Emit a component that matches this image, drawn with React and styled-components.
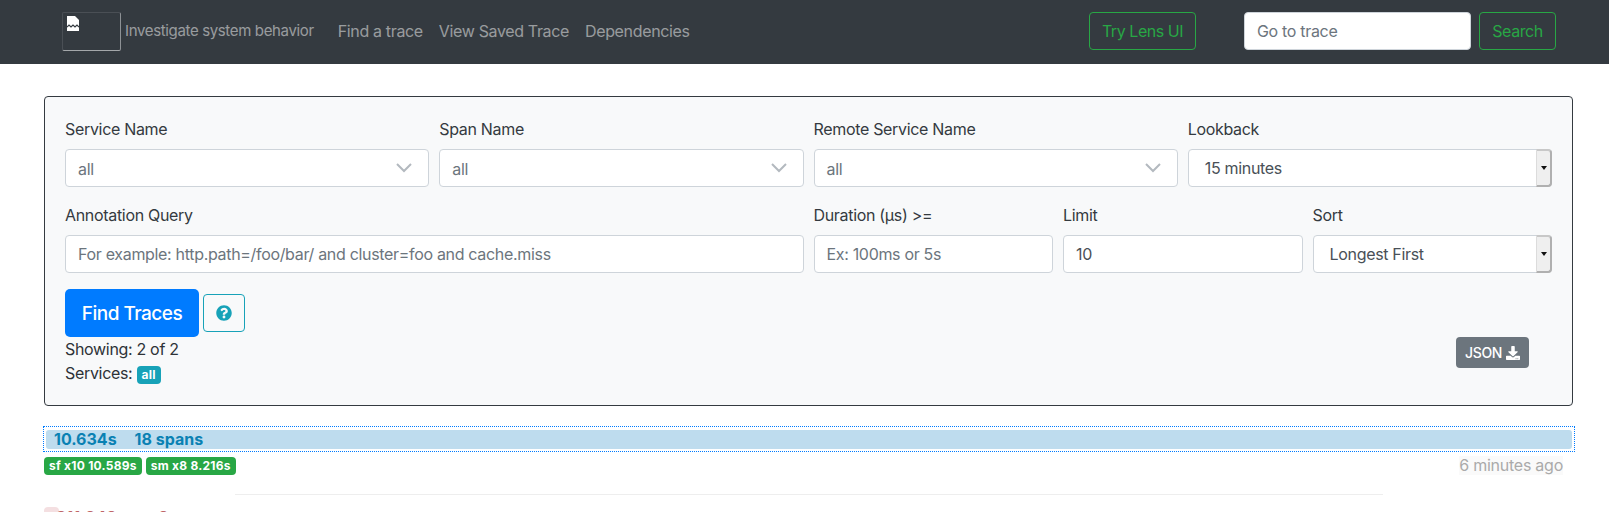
import React from 'react';
import styled, { createGlobalStyle } from 'styled-components';
import { FaQuestionCircle, FaDownload } from 'react-icons/fa';

const GlobalStyle = createGlobalStyle`
  html, body {
    margin: 0;
    padding: 0;
    height: 512px;
    overflow: hidden;
    background: #fff;
  }
  body {
    font-family: Inter, "Liberation Sans", sans-serif;
    font-size: 16px;
    line-height: 24px;
    color: #2d3237;
    letter-spacing: -0.32px;
  }
  * {
    box-sizing: border-box;
  }
`;

const Navbar = styled.nav`
  height: 64px;
  background: #343a40;
  display: flex;
  align-items: center;
  padding: 0 53px 2px 62px;
`;

const LogoBox = styled.div`
  width: 59px;
  height: 39px;
  margin-right: 4px;
  padding: 3px 4px;
  border: 1px solid #4a4f55;
  border-right-color: #8d9195;
  border-bottom-color: #a4a7aa;
  border-radius: 2px;
  line-height: 0;
`;

const Tagline = styled.span`
  font-size: 15px;
  letter-spacing: -0.35px;
  color: rgba(255, 255, 255, 0.5);
  margin-right: 16px;
`;

const NavLink = styled.a`
  padding: 0 8px;
  letter-spacing: -0.35px;
  color: rgba(255, 255, 255, 0.5);
`;

const NavRight = styled.div`
  margin-left: auto;
  display: flex;
  align-items: center;
`;

const OutlineSuccess = styled.button`
  width: ${({ $width }) => $width}px;
  height: 38px;
  padding: 0;
  font: inherit;
  letter-spacing: -0.45px;
  color: #28a745;
  background: transparent;
  border: 1px solid #28a745;
  border-radius: 4px;
`;

const TraceInput = styled.input`
  width: 227px;
  height: 38px;
  margin: 0 8px 0 48px;
  padding: 0 12px;
  font: inherit;
  letter-spacing: inherit;
  border: 1px solid #ced4da;
  border-radius: 4px;
  &::placeholder {
    color: #6c757d;
    opacity: 1;
  }
`;

const Main = styled.main`
  padding: 32px 36px 0 44px;
`;

const Card = styled.section`
  background: #f8f9fa;
  border: 1px solid #343a40;
  border-radius: 4px;
  padding: 20px;
`;

const FieldGrid = styled.div`
  display: grid;
  grid-template-columns: repeat(12, 1fr);
  column-gap: 10px;
  row-gap: 16px;
`;

const Field = styled.label`
  display: flex;
  flex-direction: column;
  grid-column: span ${({ $span }) => $span};
  min-width: 0;
`;

const Label = styled.span`
  height: 24px;
  margin-bottom: 8px;
  color: #343a40;
`;

const Control = styled.div`
  position: relative;
  height: 38px;
  display: flex;
  align-items: center;
  background: #fff;
  border: 1px solid #ced4da;
  border-radius: 4px;
  padding: 0 12px;
  color: #495057;
`;

const Placeholder = styled.span`
  color: #6c757d;
  padding-top: 2px;
`;

const ControlInput = styled.input`
  width: 100%;
  border: 0;
  outline: 0;
  padding: 0;
  background: transparent;
  font: inherit;
  letter-spacing: inherit;
  color: #495057;
  &::placeholder {
    color: #6c757d;
    opacity: 1;
  }
`;

const Chevron = styled.svg`
  margin-left: auto;
  width: 16px;
  height: 10px;
  color: #b3b9bf;
  margin-right: 4px;
`;

const NativeValue = styled.span`
  padding-left: ${({ $indent }) => $indent}px;
`;

const Spinner = styled.span`
  position: absolute;
  top: -1px;
  bottom: -1px;
  right: -1px;
  width: 16px;
  display: flex;
  align-items: center;
  justify-content: center;
  background: #efefef;
  border-left: 1px solid #dcdcdc;
  border-right: 2px solid #b0b0b0;
  border-bottom: 2px solid #b0b0b0;
  border-top: 2px solid #c8c8c8;
  border-radius: 0 4px 4px 0;
`;

const SpinnerArrow = styled.span`
  width: 0;
  height: 0;
  border-left: 3.5px solid transparent;
  border-right: 3.5px solid transparent;
  border-top: 4px solid #111;
`;

const Actions = styled.div`
  display: flex;
  align-items: center;
  gap: 4px;
  margin-top: 16px;
`;

const FindButton = styled.button`
  width: 134px;
  height: 48px;
  padding: 1px 0 0;
  font: inherit;
  font-size: 19px;
  font-weight: 500;
  letter-spacing: -0.5px;
  color: #fff;
  background: #007bff;
  border: 0;
  border-radius: 5px;
`;

const HelpButton = styled.button`
  width: 42px;
  height: 38px;
  display: flex;
  align-items: center;
  justify-content: center;
  padding: 0;
  color: #17a2b8;
  background: transparent;
  border: 1px solid #17a2b8;
  border-radius: 4px;
  font-size: 16px;
`;

const StatusRow = styled.div`
  display: flex;
  justify-content: space-between;
  align-items: flex-start;
`;

const Badge = styled.span`
  display: inline-flex;
  align-items: center;
  height: 18px;
  padding: 0 5px;
  border-radius: 4px;
  font-size: 12px;
  line-height: 18px;
  font-weight: 700;
  letter-spacing: 0.25px;
  color: #fff;
  background: ${({ $bg }) => $bg};
`;

const JsonButton = styled.button`
  width: 73px;
  height: 31px;
  margin-right: 23px;
  display: flex;
  align-items: center;
  justify-content: center;
  gap: 4px;
  font: inherit;
  font-size: 14px;
  font-weight: 500;
  letter-spacing: inherit;
  color: #fff;
  background: #6c757d;
  border: 0;
  border-radius: 4px;
`;

const TraceRow = styled.div`
  margin: 20px -2px 0 -1px;
  height: 26px;
  padding: 3px 2px 2px;
  border: 1px dotted #007bff;
`;

const TraceBar = styled.div`
  height: 100%;
  display: flex;
  align-items: center;
  gap: 18px;
  padding: 0 0 1px 8px;
  font-weight: 700;
  letter-spacing: 0;
  color: #0a81b3;
  background: #bedcee;
  border-radius: 3px;
`;

const TraceMeta = styled.div`
  display: flex;
  align-items: center;
  justify-content: space-between;
  margin-top: 4px;
  padding-right: 10px;
`;

const BadgeRow = styled.div`
  display: flex;
  gap: 4px;
`;

const TimeAgo = styled.span`
  line-height: 19px;
  color: #aaa;
  background: #fafafa;
  letter-spacing: -0.25px;
`;

const Divider = styled.hr`
  margin: 19px 190px 0 191px;
  border: 0;
  border-top: 1px solid #eee;
`;

const NextTrace = styled.div`
  display: flex;
  align-items: flex-start;
  gap: 18px;
  margin-top: 12px;
  height: 20px;
  color: #a33;
  font-weight: 700;
  letter-spacing: 0;
`;

const NextMark = styled.span`
  width: 15px;
  height: 18px;
  margin-right: -21px;
  background: #f4dfe1;
  border-radius: 4px;
`;

const NextText = styled.span`
  line-height: 20px;
  opacity: 0.75;
  &:first-of-type {
    margin-left: 12px;
  }
`;

const DocIcon = () => (
  <svg width="12" height="15" viewBox="0 0 12 15">
    <path fill="#fff" d="M0 0h8l4 4v11H0z" />
    <path fill="none" stroke="#343a40" strokeWidth="1.2" d="M0 11l2-2 2 2 2-2 2 2 2-2 2 2" />
  </svg>
);

const SelectChevron = () => (
  <Chevron viewBox="0 0 16 10">
    <path d="M1 1l7 7 7-7" fill="none" stroke="currentColor" strokeWidth="2" />
  </Chevron>
);

const searchFields = [
  { label: 'Service Name', value: 'all' },
  { label: 'Span Name', value: 'all' },
  { label: 'Remote Service Name', value: 'all' },
];

export default function App() {
  return (
    <>
      <GlobalStyle />
      <Navbar>
        <LogoBox>
          <DocIcon />
        </LogoBox>
        <Tagline>Investigate system behavior</Tagline>
        <NavLink>Find a trace</NavLink>
        <NavLink>View Saved Trace</NavLink>
        <NavLink>Dependencies</NavLink>
        <NavRight>
          <OutlineSuccess $width={107}>Try Lens UI</OutlineSuccess>
          <TraceInput placeholder="Go to trace" />
          <OutlineSuccess $width={77}>Search</OutlineSuccess>
        </NavRight>
      </Navbar>
      <Main>
        <Card>
          <FieldGrid>
            {searchFields.map((field) => (
              <Field key={field.label} $span={3}>
                <Label>{field.label}</Label>
                <Control>
                  <Placeholder>{field.value}</Placeholder>
                  <SelectChevron />
                </Control>
              </Field>
            ))}
            <Field $span={3}>
              <Label>Lookback</Label>
              <Control>
                <NativeValue $indent={4}>15 minutes</NativeValue>
                <Spinner>
                  <SpinnerArrow />
                </Spinner>
              </Control>
            </Field>
            <Field $span={6}>
              <Label>Annotation Query</Label>
              <Control>
                <ControlInput placeholder="For example: http.path=/foo/bar/ and cluster=foo and cache.miss" />
              </Control>
            </Field>
            <Field $span={2}>
              <Label>Duration (μs) &gt;=</Label>
              <Control>
                <ControlInput placeholder="Ex: 100ms or 5s" />
              </Control>
            </Field>
            <Field $span={2}>
              <Label>Limit</Label>
              <Control>
                <ControlInput defaultValue="10" />
              </Control>
            </Field>
            <Field $span={2}>
              <Label>Sort</Label>
              <Control>
                <NativeValue $indent={4}>Longest First</NativeValue>
                <Spinner>
                  <SpinnerArrow />
                </Spinner>
              </Control>
            </Field>
          </FieldGrid>
          <Actions>
            <FindButton>Find Traces</FindButton>
            <HelpButton>
              <FaQuestionCircle />
            </HelpButton>
          </Actions>
          <StatusRow>
            <div>
              <div>Showing: 2 of 2</div>
              <div>
                Services: <Badge $bg="#17a2b8">all</Badge>
              </div>
            </div>
            <JsonButton>
              JSON <FaDownload size={14} />
            </JsonButton>
          </StatusRow>
        </Card>
        <TraceRow>
          <TraceBar>
            <span>10.634s</span>
            <span>18 spans</span>
          </TraceBar>
        </TraceRow>
        <TraceMeta>
          <BadgeRow>
            <Badge $bg="#28a745">sf x10 10.589s</Badge>
            <Badge $bg="#28a745">sm x8 8.216s</Badge>
          </BadgeRow>
          <TimeAgo>6 minutes ago</TimeAgo>
        </TraceMeta>
        <Divider />
        <NextTrace>
          <NextMark />
          <NextText>311.848ms</NextText>
          <NextText>3 spans</NextText>
        </NextTrace>
      </Main>
    </>
  );
}
